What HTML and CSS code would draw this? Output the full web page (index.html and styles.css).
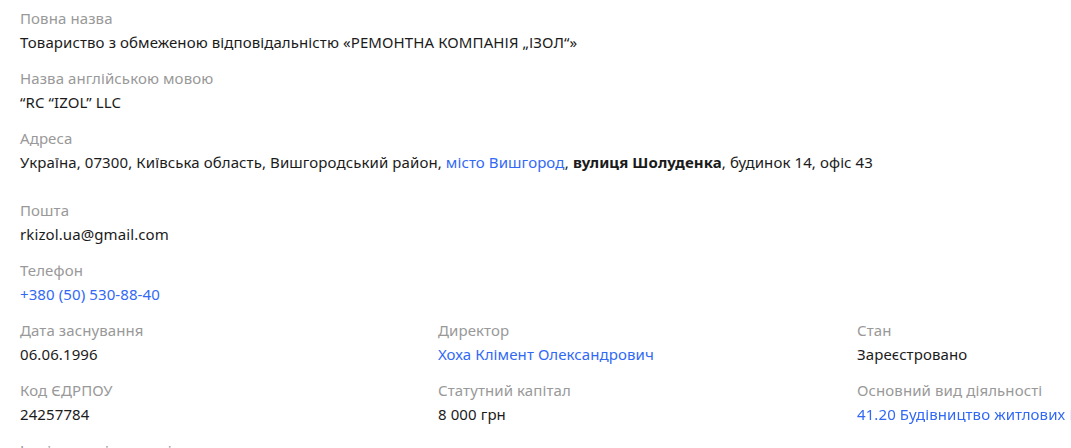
FILE: index.html
```html
<!DOCTYPE html>
<html lang="uk">
<head>
<meta charset="utf-8">
<link rel="stylesheet" href="styles.css">
</head>
<body>
<div class="card">
  <div class="field">
    <div class="label">Повна назва</div>
    <div class="value">Товариство з обмеженою відповідальністю «РЕМОНТНА КОМПАНІЯ „ІЗОЛ“»</div>
  </div>
  <div class="field">
    <div class="label">Назва англійською мовою</div>
    <div class="value">“RC “IZOL” LLC</div>
  </div>
  <div class="field field-wide">
    <div class="label">Адреса</div>
    <div class="value">Україна, 07300, Київська область, Вишгородський район, <a class="link" href="#">місто Вишгород</a>, <b>вулиця Шолуденка</b>, будинок 14, офіс 43</div>
  </div>
  <div class="field">
    <div class="label">Пошта</div>
    <div class="value">rkizol.ua@gmail.com</div>
  </div>
  <div class="field">
    <div class="label">Телефон</div>
    <div class="value"><a class="link" href="#">+380 (50) 530-88-40</a></div>
  </div>
  <div class="grid">
    <div class="field">
      <div class="label">Дата заснування</div>
      <div class="value">06.06.1996</div>
    </div>
    <div class="field">
      <div class="label">Директор</div>
      <div class="value"><a class="link" href="#">Хоха Клімент Олександрович</a></div>
    </div>
    <div class="field">
      <div class="label">Стан</div>
      <div class="value">Зареєстровано</div>
    </div>
    <div class="field">
      <div class="label">Код ЄДРПОУ</div>
      <div class="value">24257784</div>
    </div>
    <div class="field">
      <div class="label">Статутний капітал</div>
      <div class="value">8 000 грн</div>
    </div>
    <div class="field clip">
      <div class="label">Основний вид діяльності</div>
      <div class="value fade"><a class="link" href="#">41.20 Будівництво житлових і нежитлових будівель</a></div>
    </div>
    <div class="field">
      <div class="label">Інші види діяльності</div>
      <div class="value">—</div>
    </div>
  </div>
</div>
</body>
</html>
```

FILE: styles.css
```css
html, body {
  margin: 0;
  padding: 0;
  background: #fff;
  overflow: hidden;
}
body {
  font-family: "Noto Sans", "Open Sans", sans-serif;
  font-size: 15px;
  letter-spacing: 0.1px;
  color: #1b1b1b;
}
.card {
  padding: 6px 0 0 20px;
}
.field {
  margin-bottom: 12px;
}
.field-wide {
  margin-bottom: 24px;
}
.label {
  color: #999;
  line-height: 24px;
}
.value {
  line-height: 24px;
  white-space: nowrap;
}
.value b {
  font-weight: 700;
}
.link {
  color: #3169f5;
  text-decoration: none;
}
.grid {
  display: grid;
  grid-template-columns: 418px 419px 214px;
}
.clip {
  overflow: hidden;
}
.fade {
  -webkit-mask-image: linear-gradient(to right, #000 calc(100% - 8px), rgba(0,0,0,0.2) 100%);
  mask-image: linear-gradient(to right, #000 calc(100% - 8px), rgba(0,0,0,0.2) 100%);
}
```
